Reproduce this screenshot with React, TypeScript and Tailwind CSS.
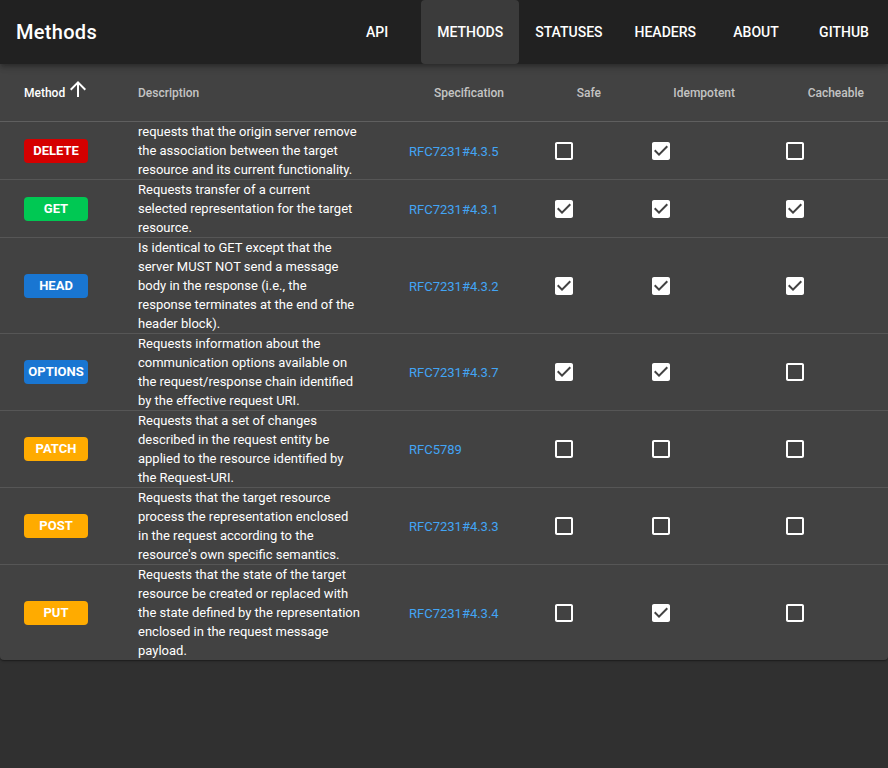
import React from 'react'

interface MethodRow {
    name: string
    color: string
    description: string
    spec: string
    safe: boolean
    idempotent: boolean
    cacheable: boolean
}

const rows: MethodRow[] = [
    {
        name: 'DELETE',
        color: 'bg-[#d50000]',
        description: 'requests that the origin server remove the association between the target resource and its current functionality.',
        spec: 'RFC7231#4.3.5',
        safe: false,
        idempotent: true,
        cacheable: false,
    },
    {
        name: 'GET',
        color: 'bg-[#00c853]',
        description: 'Requests transfer of a current selected representation for the target resource.',
        spec: 'RFC7231#4.3.1',
        safe: true,
        idempotent: true,
        cacheable: true,
    },
    {
        name: 'HEAD',
        color: 'bg-[#1976d2]',
        description: 'Is identical to GET except that the server MUST NOT send a message body in the response (i.e., the response terminates at the end of the header block).',
        spec: 'RFC7231#4.3.2',
        safe: true,
        idempotent: true,
        cacheable: true,
    },
    {
        name: 'OPTIONS',
        color: 'bg-[#1976d2]',
        description: 'Requests information about the communication options available on the request/response chain identified by the effective request URI.',
        spec: 'RFC7231#4.3.7',
        safe: true,
        idempotent: true,
        cacheable: false,
    },
    {
        name: 'PATCH',
        color: 'bg-[#ffab00]',
        description: 'Requests that a set of changes described in the request entity be applied to the resource identified by the Request-URI.',
        spec: 'RFC5789',
        safe: false,
        idempotent: false,
        cacheable: false,
    },
    {
        name: 'POST',
        color: 'bg-[#ffab00]',
        description: "Requests that the target resource process the representation enclosed in the request according to the resource's own specific semantics.",
        spec: 'RFC7231#4.3.3',
        safe: false,
        idempotent: false,
        cacheable: false,
    },
    {
        name: 'PUT',
        color: 'bg-[#ffab00]',
        description: 'Requests that the state of the target resource be created or replaced with the state defined by the representation enclosed in the request message payload.',
        spec: 'RFC7231#4.3.4',
        safe: false,
        idempotent: true,
        cacheable: false,
    },
]

const navItems = ['API', 'METHODS', 'STATUSES', 'HEADERS', 'ABOUT', 'GITHUB']

const cols = 'grid grid-cols-[114px_271px_143px_97px_134px_129px]'

function Check({ checked }: { checked: boolean }) {
    return (
        <svg width="24" height="24" viewBox="0 0 24 24" className="block">
            {checked ? (
                <path
                    fill="#fff"
                    d="M19 3H5c-1.11 0-2 .9-2 2v14c0 1.1.89 2 2 2h14c1.11 0 2-.9 2-2V5c0-1.1-.89-2-2-2zm-9 14l-5-5 1.41-1.41L10 14.170l7.59-7.59L19 8l-9 9z"
                />
            ) : (
                <path
                    fill="#fff"
                    d="M19 5v14H5V5h14m0-2H5c-1.1 0-2 .9-2 2v14c0 1.1.9 2 2 2h14c1.1 0 2-.9 2-2V5c0-1.1-.9-2-2-2z"
                />
            )}
        </svg>
    )
}

export default function App() {
    return (
        <div className="min-h-[768px] bg-[#303030] font-['Roboto','Liberation_Sans',sans-serif] text-white">
            <header className="relative z-10 flex h-16 items-center bg-[#212121] pl-4 shadow-[0_2px_4px_-1px_rgba(0,0,0,0.2),0_4px_5px_0_rgba(0,0,0,0.14),0_1px_10px_0_rgba(0,0,0,0.12)]">
                <h1 className="flex-1 text-[20px] font-medium tracking-[0.3px]">Methods</h1>
                <nav className="flex h-16">
                    {navItems.map((item) => (
                        <div
                            key={item}
                            className={`flex h-16 min-w-[88px] items-center justify-center px-4 text-[14px] font-medium ${
                                item === 'METHODS' ? 'rounded bg-[#3b3b3b]' : ''
                            }`}
                        >
                            {item}
                        </div>
                    ))}
                </nav>
            </header>

            <div className="overflow-hidden rounded-b bg-[#424242] shadow-[0_1px_3px_0_rgba(0,0,0,0.2),0_1px_1px_0_rgba(0,0,0,0.14),0_2px_1px_-1px_rgba(0,0,0,0.12)]">
                <div className={`${cols} h-[58px] items-center border-b border-[#5f5f5f] text-[12px] font-medium text-white/70`}>
                    <div className="flex items-center pl-6 text-white">
                        Method
                        <svg width="24" height="24" viewBox="0 0 24 24" className="mb-[8px] ml-px">
                            <path fill="#fff" d="M4 12l1.41 1.41L11 7.83V20h2V7.83l5.58 5.59L20 12l-8-8-8 8z" />
                        </svg>
                    </div>
                    <div className="pl-6">Description</div>
                    <div className="pr-6 text-right">Specification</div>
                    <div className="pr-6 text-right">Safe</div>
                    <div className="pr-6 text-right">Idempotent</div>
                    <div className="pr-6 text-right">Cacheable</div>
                </div>

                {rows.map((row, i) => (
                    <div
                        key={row.name}
                        className={`${cols} items-center ${i < rows.length - 1 ? 'border-b border-[#565656]' : ''}`}
                    >
                        <div className="pl-6">
                            <span
                                className={`flex h-6 w-16 items-center justify-center rounded text-[13px] font-bold ${row.color}`}
                            >
                                {row.name}
                            </span>
                        </div>
                        <div className="pl-6">
                            <p className="w-[223.5px] text-[13px] leading-[19px]">{row.description}</p>
                        </div>
                        <div className="pl-6">
                            <a className="text-[13px] text-[#42a5f5]">{row.spec}</a>
                        </div>
                        <div className="pl-6">
                            <Check checked={row.safe} />
                        </div>
                        <div className="pl-6">
                            <Check checked={row.idempotent} />
                        </div>
                        <div className="pl-6">
                            <Check checked={row.cacheable} />
                        </div>
                    </div>
                ))}
            </div>
        </div>
    )
}
